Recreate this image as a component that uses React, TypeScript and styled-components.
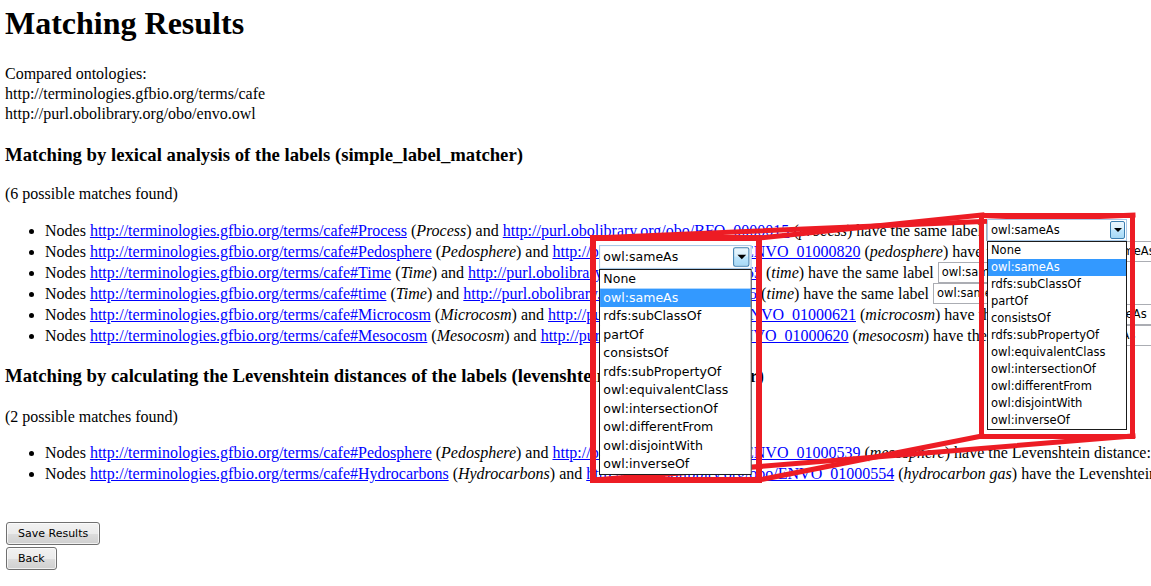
import React from 'react';
import styled, { createGlobalStyle } from 'styled-components';

const GlobalStyle = createGlobalStyle`
  html, body { margin: 0; padding: 0; background: #fff; overflow: hidden; }
  body {
    font-family: "Liberation Serif", "Times New Roman", serif;
    font-size: 16px;
    color: #000;
  }
`;

const Page = styled.div`
  position: relative;
  width: 1151px;
  height: 586px;
  overflow: hidden;
  box-sizing: border-box;
  padding: 5px 0 0 5px;
`;

const Title = styled.h1`
  margin: 0;
  font-size: 32px;
  font-weight: bold;
  line-height: 37px;
`;

const Sources = styled.p`
  margin: 22px 0 0;
  line-height: 20px;
`;

const SectionTitle = styled.h3<{ $gap: number }>`
  margin: ${p => p.$gap}px 0 0;
  font-size: 18.72px;
  font-weight: bold;
  line-height: 21.5px;
  white-space: nowrap;
`;

const Note = styled.p<{ $gap: number }>`
  margin: ${p => p.$gap}px 0 0;
  line-height: 20px;
`;

const MatchList = styled.ul<{ $gap: number }>`
  margin: ${p => p.$gap}px 0 0;
  padding-left: 40px;
  list-style: disc;
`;

const MatchItem = styled.li`
  height: 21px;
  line-height: 21px;
  white-space: nowrap;
`;

const Link = styled.a`
  color: #0000ff;
  text-decoration: underline;
`;

const Term = styled.i`
  font-style: italic;
`;

const SelectBox = styled.span<{ $active?: boolean; $height: number }>`
  display: inline-flex;
  align-items: stretch;
  box-sizing: border-box;
  width: 140px;
  height: ${p => p.$height}px;
  vertical-align: top;
  border: 1px solid ${p => (p.$active ? '#a9c8e6' : '#abadb3')};
  background: #fff;
  font-family: "DejaVu Sans", Tahoma, sans-serif;
  font-size: 11.5px;
  font-style: normal;
  color: #000;
  line-height: normal;
`;

const SelectValue = styled.span`
  flex: 1;
  display: flex;
  align-items: center;
  padding-left: 3px;
  overflow: hidden;
  white-space: nowrap;
`;

const ArrowButton = styled.span<{ $active?: boolean }>`
  position: relative;
  width: 15px;
  margin: 1px;
  box-sizing: border-box;
  border: 1px solid ${p => (p.$active ? '#3c7fb1' : '#8f8f8f')};
  border-radius: 2px;
  background: ${p =>
    p.$active
      ? 'linear-gradient(#eaf6fd 0%, #d9f0fc 45%, #bee6fd 50%, #a7d9f5 100%)'
      : 'linear-gradient(#f2f2f2 0%, #ebebeb 45%, #dddddd 50%, #cfcfcf 100%)'};
  &::after {
    content: '';
    position: absolute;
    left: 50%;
    top: 50%;
    margin: -2px 0 0 -4px;
    border-left: 4px solid transparent;
    border-right: 4px solid transparent;
    border-top: 4px solid #000;
  }
`;

const OptionList = styled.ul`
  margin: 0;
  padding: 0;
  list-style: none;
  width: 140px;
  box-sizing: border-box;
  border: 1px solid #1b1b1b;
  background: #fff;
  font-family: "DejaVu Sans", Tahoma, sans-serif;
  font-size: 11.5px;
`;

const OptionItem = styled.li<{ $selected?: boolean }>`
  height: 17px;
  line-height: 17px;
  padding-left: 3px;
  white-space: nowrap;
  background: ${p => (p.$selected ? '#3399ff' : '#fff')};
  color: ${p => (p.$selected ? '#fff' : '#000')};
`;

const Actions = styled.div`
  margin: 38px 0 0 1px;
  display: flex;
  flex-direction: column;
  align-items: flex-start;
  gap: 2px;
`;

const Button = styled.button`
  height: 23px;
  padding: 0 11px;
  font-family: "DejaVu Sans", Tahoma, sans-serif;
  font-size: 11px;
  color: #000;
  border: 1px solid #707070;
  border-radius: 3px;
  background: linear-gradient(#f2f2f2 0%, #ebebeb 50%, #dddddd 51%, #cfcfcf 100%);
  box-shadow: inset 0 0 0 1px rgba(255, 255, 255, 0.7);
`;

const Connectors = styled.svg`
  position: absolute;
  left: 0;
  top: 0;
  width: 1151px;
  height: 586px;
  pointer-events: none;
`;

const DropdownLayer = styled.div<{ $x: number; $y: number; $scale: number }>`
  position: absolute;
  left: ${p => p.$x}px;
  top: ${p => p.$y}px;
  transform: scale(${p => p.$scale});
  transform-origin: 0 0;
`;

const ZoomFrame = styled.div<{ $x: number; $y: number; $w: number; $h: number; $stroke: number }>`
  position: absolute;
  left: ${p => p.$x}px;
  top: ${p => p.$y}px;
  width: ${p => p.$w}px;
  height: ${p => p.$h}px;
  box-sizing: border-box;
  border: ${p => p.$stroke}px solid #ed1c24;
`;

const OPTIONS = [
  'None',
  'owl:sameAs',
  'rdfs:subClassOf',
  'partOf',
  'consistsOf',
  'rdfs:subPropertyOf',
  'owl:equivalentClass',
  'owl:intersectionOf',
  'owl:differentFrom',
  'owl:disjointWith',
  'owl:inverseOf',
];

const CAFE = 'http://terminologies.gfbio.org/terms/cafe#';
const OBO = 'http://purl.obolibrary.org/obo/';

type Match = { local: string; localLabel: string; remote: string; remoteLabel: string; distance?: number };

const lexical: Match[] = [
  { local: 'Process', localLabel: 'Process', remote: 'BFO_0000015', remoteLabel: 'process' },
  { local: 'Pedosphere', localLabel: 'Pedosphere', remote: 'ENVO_01000820', remoteLabel: 'pedosphere' },
  { local: 'Time', localLabel: 'Time', remote: 'PATO_0000165', remoteLabel: 'time' },
  { local: 'time', localLabel: 'Time', remote: 'PATO_0000165', remoteLabel: 'time' },
  { local: 'Microcosm', localLabel: 'Microcosm', remote: 'ENVO_01000621', remoteLabel: 'microcosm' },
  { local: 'Mesocosm', localLabel: 'Mesocosm', remote: 'ENVO_01000620', remoteLabel: 'mesocosm' },
];

const levenshtein: Match[] = [
  { local: 'Pedosphere', localLabel: 'Pedosphere', remote: 'ENVO_01000539', remoteLabel: 'mesosphere', distance: 2 },
  { local: 'Hydrocarbons', localLabel: 'Hydrocarbons', remote: 'ENVO_01000554', remoteLabel: 'hydrocarbon gas', distance: 5 },
];

function RelationSelect({ active, height }: { active?: boolean; height: number }) {
  return (
    <SelectBox $active={active} $height={height}>
      <SelectValue>owl:sameAs</SelectValue>
      <ArrowButton $active={active} />
    </SelectBox>
  );
}

function OpenDropdown() {
  return (
    <div>
      <RelationSelect active height={22} />
      <OptionList>
        {OPTIONS.map(o => (
          <OptionItem key={o} $selected={o === 'owl:sameAs'}>
            {o}
          </OptionItem>
        ))}
      </OptionList>
    </div>
  );
}

function MatchRow({ m }: { m: Match }) {
  return (
    <MatchItem>
      Nodes <Link href="#">{CAFE + m.local}</Link> (<Term>{m.localLabel}</Term>) and{' '}
      <Link href="#">{OBO + m.remote}</Link> (<Term>{m.remoteLabel}</Term>){' '}
      {m.distance === undefined ? 'have the same label' : `have the Levenshtein distance: ${m.distance}`}{' '}
      <RelationSelect height={21} />
    </MatchItem>
  );
}

export default function App() {
  return (
    <>
      <GlobalStyle />
      <Page>
        <Title>Matching Results</Title>
        <Sources>
          Compared ontologies:
          <br />
          http://terminologies.gfbio.org/terms/cafe
          <br />
          http://purl.obolibrary.org/obo/envo.owl
        </Sources>

        <SectionTitle $gap={20}>Matching by lexical analysis of the labels (simple_label_matcher)</SectionTitle>
        <Note $gap={18}>(6 possible matches found)</Note>
        <MatchList $gap={16}>
          {lexical.map((m, i) => (
            <MatchRow key={i} m={m} />
          ))}
        </MatchList>

        <SectionTitle $gap={19}>
          Matching by calculating the Levenshtein distances of the labels (levenshtein_distance_matcher)
        </SectionTitle>
        <Note $gap={21}>(2 possible matches found)</Note>
        <MatchList $gap={15}>
          {levenshtein.map((m, i) => (
            <MatchRow key={i} m={m} />
          ))}
        </MatchList>

        <Actions>
          <Button>Save Results</Button>
          <Button>Back</Button>
        </Actions>

        <Connectors viewBox="0 0 1151 586">
          <g stroke="#ed1c24" strokeWidth={5} strokeLinecap="square">
            <line x1={594} y1={238} x2={1133} y2={215} />
            <line x1={759} y1={238} x2={982} y2={215} />
            <line x1={594} y1={480} x2={1133} y2={436} />
            <line x1={759} y1={480} x2={982} y2={436} />
          </g>
        </Connectors>

        <DropdownLayer $x={987} $y={219} $scale={1}>
          <OpenDropdown />
        </DropdownLayer>
        <DropdownLayer $x={599} $y={245} $scale={1.09}>
          <OpenDropdown />
        </DropdownLayer>

        <ZoomFrame $x={979} $y={213} $w={156} $h={226} $stroke={5} />
        <ZoomFrame $x={590} $y={235} $w={172} $h={248} $stroke={6} />
      </Page>
    </>
  );
}
